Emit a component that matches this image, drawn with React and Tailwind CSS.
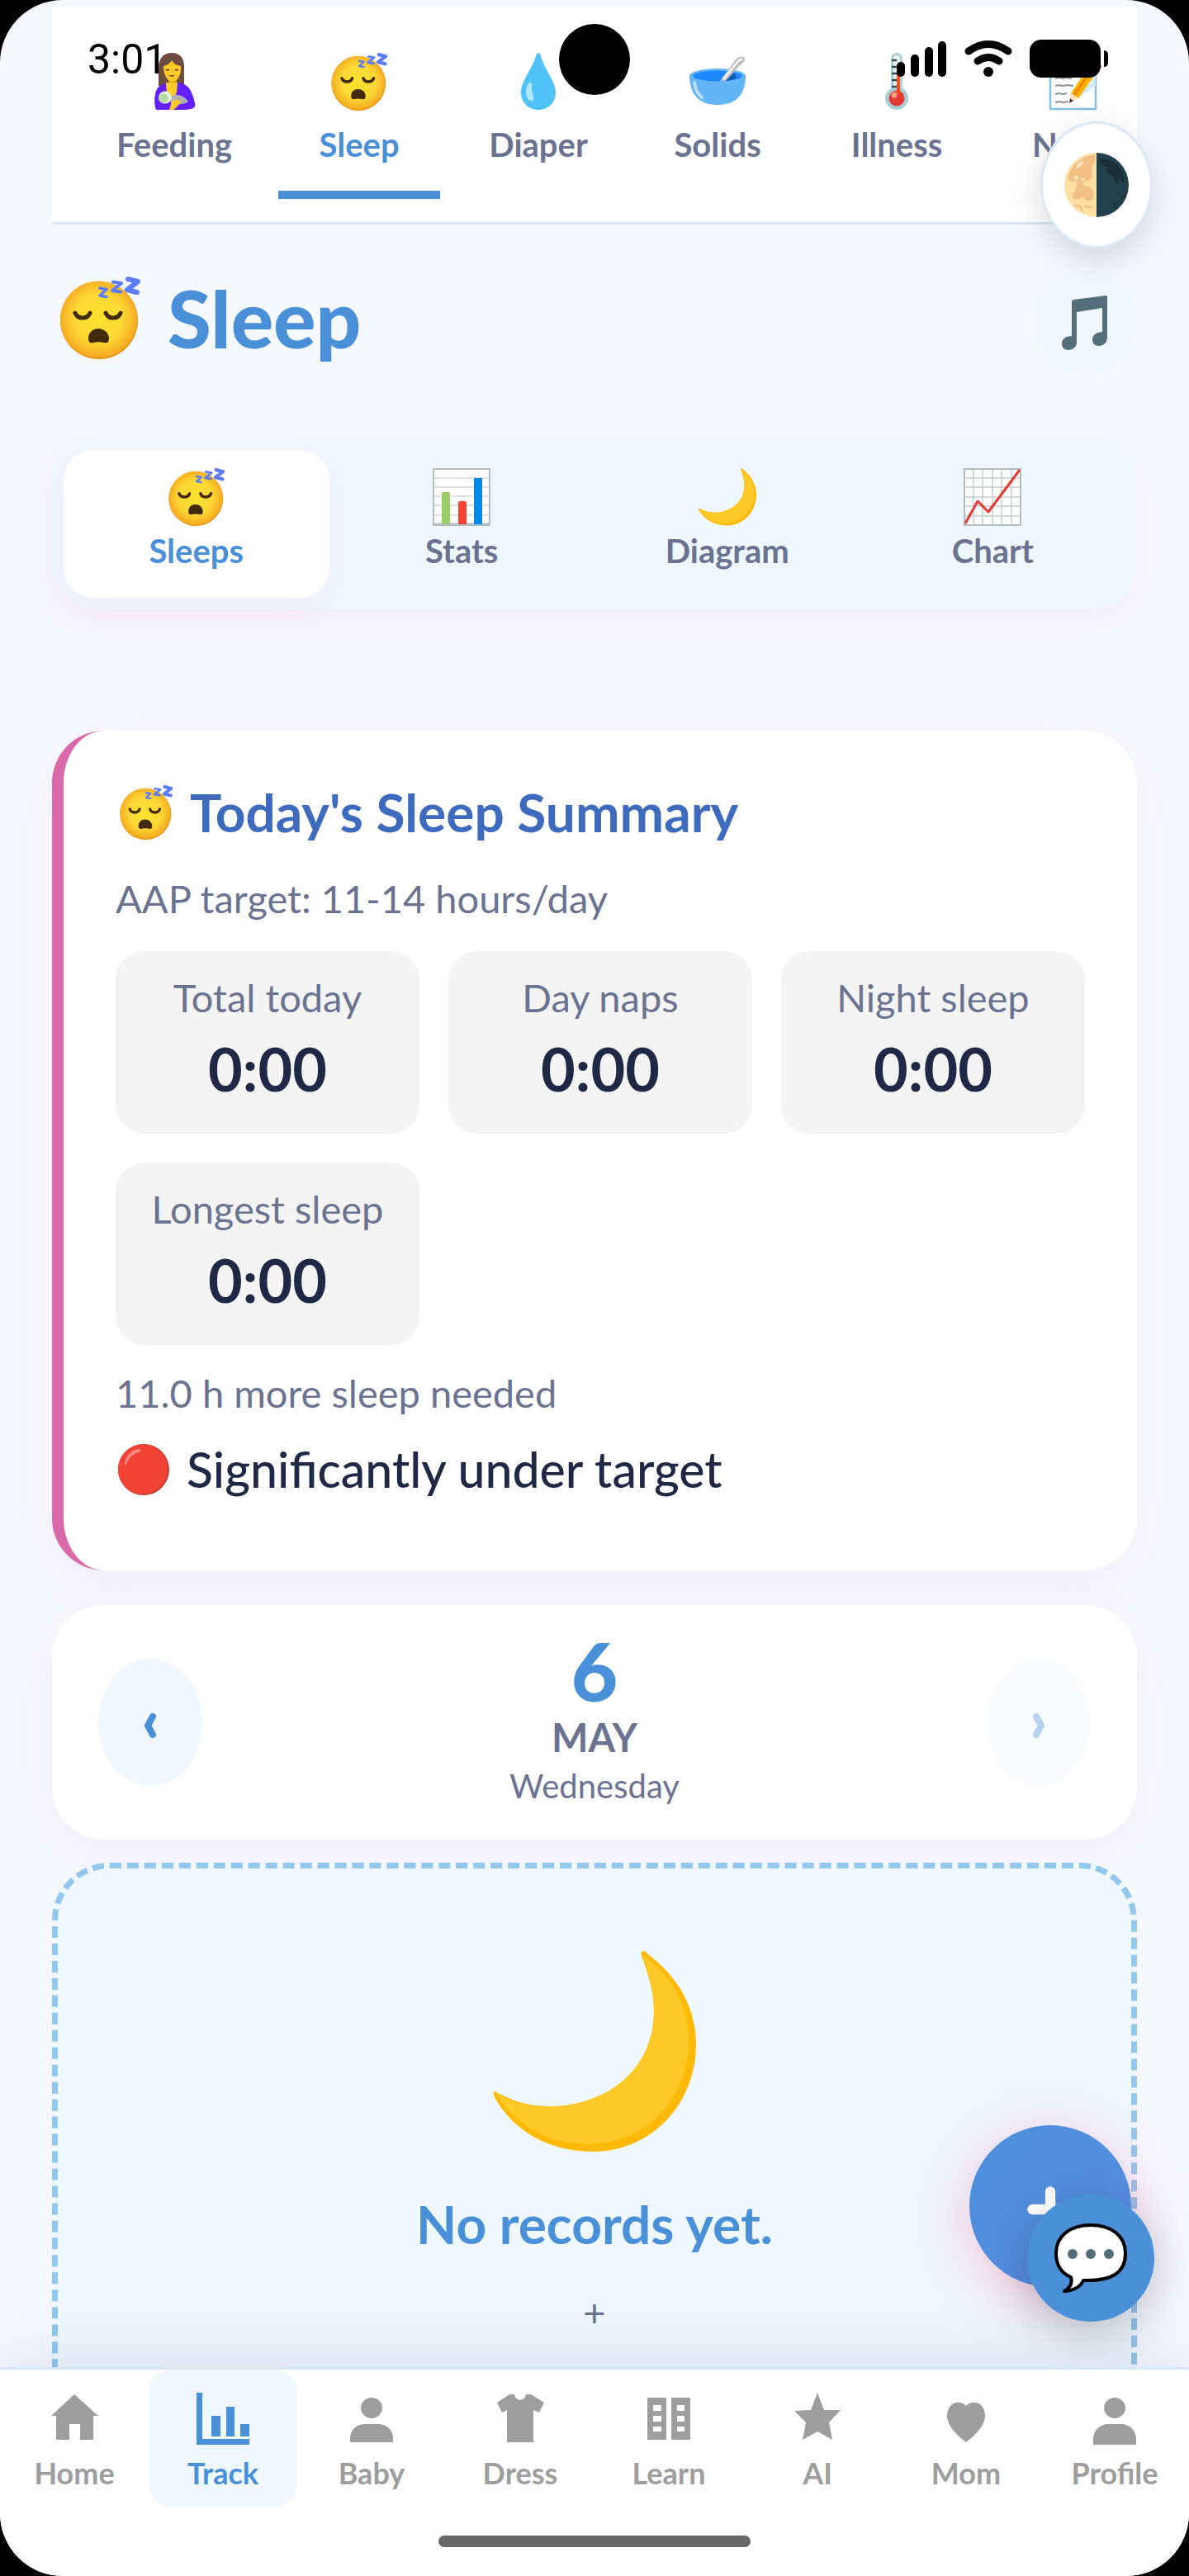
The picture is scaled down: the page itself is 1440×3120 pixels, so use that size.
import React from 'react';
import { Plus } from 'lucide-react';

/* ---------- Illustrated icons ---------- */

function SleepFace({ className }) {
  return (
    <svg viewBox="0 0 100 100" className={className} aria-hidden="true">
      <defs>
        <radialGradient id="face" cx="50%" cy="48%" r="52%">
          <stop offset="0%" stopColor="#ffe22e" />
          <stop offset="60%" stopColor="#fdd835" />
          <stop offset="100%" stopColor="#f5a820" />
        </radialGradient>
      </defs>
      <circle cx="49" cy="53" r="47" fill="#e88f0a" />
      <circle cx="48.500" cy="52" r="46.500" fill="url(#face)" />
      <g fill="none" stroke="#422b0d" strokeWidth="5" strokeLinecap="round">
        <path d="M20 44c3 8 15 8 18 0" />
        <path d="M57 44c3 8 15 8 18 0" />
      </g>
      <path d="M36 75c0-7 5-12 12-12s13 5 13 12c0 5-3 6-6 5-5-1-9-1-13 0-4 1-6-1-6-5z" fill="#422b0d" />
      <g fill="none" stroke="#5c7cfa" strokeLinejoin="round" strokeLinecap="round">
        <path strokeWidth="3.500" d="M50 14l8 1.500-8 7.500 8 1.500" />
        <path strokeWidth="4" d="M66 6.500l10 1.500-11 9 10 1.500" />
        <path strokeWidth="6" d="M84 3l12 3-13 10 12 3" />
      </g>
    </svg>
  );
}

function FeedingIcon({ className }) {
  return (
    <svg viewBox="0 0 70 70" className={className} aria-hidden="true">
      <path d="M16 37V18C16 6 23 0 32 0s15 6 15 16v24H16z" fill="#6d4c41" />
      <path d="M28 30h10v12H28z" fill="#e59600" />
      <path d="M13 69c-3-8-2-19 1-25 3-5 9-7 14-8h12c8 1 13 5 16 12 3 8 5 14 4 17-1 4-13 4-20 4z" fill="#651fff" />
      <path d="M25 36h14l-1 12c-2 6-8 7-12 2z" fill="#ffca28" />
      <path d="M22 16c4-1 8-3 10-7 2 4 6 6 11 7 1 10-4 19-10 19s-11-8-11-19z" fill="#ffca28" />
      <path d="M25 20q2 2 4 0M36 20q2 2 4 0" fill="none" stroke="#543930" strokeWidth="1.500" />
      <path d="M28 27q4 4 8 0z" fill="#795548" />
      <path d="M30 53c8-4 16-2 22 6-5 4-14 4-21 2z" fill="#b0b0b0" />
      <ellipse cx="24" cy="54" rx="8" ry="7.500" fill="#e5efdd" />
      <ellipse cx="22" cy="55" rx="6" ry="5.500" fill="#b8dba0" />
      <path d="M32 59c4-3 8-3 11 0-2 4-5 7-9 10h-5z" fill="#ffca28" />
    </svg>
  );
}

function DropIcon({ className }) {
  return (
    <svg viewBox="0 0 70 70" className={className} aria-hidden="true">
      <path d="M35 0c2 0 3 4 5 10 6 15 16 26 16 38 0 12-9 21-21 21s-21-9-21-21c0-12 9-23 16-38 2-6 3-10 5-10z" fill="#4fc3f7" />
      <path d="M25 36c3-1 2 5 2 9 1 5 4 12 1 13-4 1-8-4-8-10s2-11 5-12z" fill="#b3e5fc" />
    </svg>
  );
}

function BowlIcon({ className }) {
  return (
    <svg viewBox="0 0 70 70" className={className} aria-hidden="true">
      <path d="M1 27c0 22 10 36 34 36s34-14 34-36z" fill="#64b5f6" />
      <ellipse cx="35" cy="28" rx="34" ry="9" fill="#64b5f6" />
      <ellipse cx="35" cy="28" rx="30" ry="6.500" fill="#1e88ff" />
      <path d="M57 27c2 4-1 6-12 7l10-10z" fill="#0d5bb5" />
      <path d="M38 34l19-26c3-4 8-4 11-2 1 3-2 7-6 9L45 34z" fill="#bdbdbd" />
      <path d="M42 32l18-22 5-3" fill="none" stroke="#eeeeee" strokeWidth="3" />
      <path d="M7 36c1 8 4 14 9 18" fill="none" stroke="#bbdefb" strokeWidth="4" strokeLinecap="round" />
    </svg>
  );
}

function ThermometerIcon({ className }) {
  return (
    <svg viewBox="0 0 70 70" className={className} aria-hidden="true">
      <path d="M28 7a7 7 0 0 1 14 0v36a14 14 0 1 1-14 0z" fill="#a8d0d5" />
      <path d="M31 7a4 4 0 0 1 8 0v36h-8z" fill="#e9f6f7" />
      <circle cx="35" cy="55" r="9.500" fill="#e53935" />
      <path d="M35 22h4v28h-4z" fill="#f4511e" />
      <circle cx="32" cy="51" r="3.500" fill="#ff9e80" />
      <path d="M29 9h6M29 17h6M29 25h6M29 33h6M29 41h6" stroke="#37474f" strokeWidth="2.500" />
    </svg>
  );
}

function NotesIcon({ className }) {
  return (
    <svg viewBox="0 0 70 70" className={className} aria-hidden="true">
      <path d="M4 2h55v66H4z" fill="#ffffff" stroke="#82bfe6" strokeWidth="2.500" />
      <path d="M31 60L53 32l6-6v14z" fill="#d7ecfa" />
      <path d="M10 31l5-1 4 1 5-1 6 1M10 40l4-1 5 1 6-1 7 1M10 50l4-1 5 1 5-1M10 60l5-1 5 1 6-1" fill="none" stroke="#8a9499" strokeWidth="2" />
      <path d="M29 49L52 14l10 7-24 34z" fill="#ffb300" />
      <path d="M33 51L56 17" stroke="#f57c00" strokeWidth="2.500" />
      <path d="M29 49l9 6-11 6z" fill="#ffe0b2" />
      <path d="M28 55l4 3-5 3z" fill="#424242" />
      <path d="M52 14l5-5c4-1 8 3 9 8l-4 5z" fill="#ef5350" />
    </svg>
  );
}

function HalfMoonIcon({ className }) {
  return (
    <svg viewBox="0 0 78 78" className={className} aria-hidden="true">
      <path d="M39 0a39 39 0 0 0 0 78z" fill="#ffe0a3" />
      <path d="M39 0a39 39 0 0 1 0 78z" fill="#23404d" />
      <path d="M37 3C22 3 8 14 4 31c2 5 7 6 10 2 3 8-2 14-5 20 5 6 11 3 14 0 1 6 8 7 12 2 2-9-2-14-9-14-3 0-5-4-1-6 8-1 9-6 8-14 1-7 6-9 4-18z" fill="#f2bf86" />
      <path d="M14 19c2-6 6-9 9-9 1 4-5 6-7 9zM12 28a2.500 3 0 1 0 4 0zM20 31a2.500 3 0 1 0 5 0z" fill="#ffe9bd" />
      <path d="M13 63l6 2 3 5M24 65l9 1" fill="none" stroke="#f2bf86" strokeWidth="3" />
      <path d="M43 9c5-4 8 0 13 0 9 4 17 16 17 28l-7-6-2 9-5-12c-5-1-9-5-8-11-4 0-8-3-8-8z" fill="#1a2f38" />
      <path d="M70 53l4-5-3 9zM60 63l7-4-6 7z" fill="#1a2f38" />
    </svg>
  );
}

function MusicIcon({ className }) {
  return (
    <svg viewBox="0 0 56 66" className={className} aria-hidden="true">
      <path
        fill="#546e7a"
        d="M12 7c0-1 1-1 2-2L53 0c1 0 2 0 2 1v50c0 6-5 10-10 10s-8-3-8-8c0-5 5-9 12-9V15L18 20v37c0 5-5 9-10 9s-8-3-8-8c0-5 4-9 12-9z"
      />
    </svg>
  );
}

function BarsIcon({ className }) {
  return (
    <svg viewBox="0 0 70 70" className={className} aria-hidden="true">
      <path d="M1 1h68v68H1z" fill="#ffffff" />
      <path d="M1 12h68M1 23h68M1 34h68M1 45h68M1 57h68" stroke="#cfd8dc" strokeWidth="1.500" />
      <path d="M1 1h68v68H1z" fill="none" stroke="#b0bec5" strokeWidth="2" />
      <path d="M1 68h68" stroke="#b0bec5" strokeWidth="3" />
      <path d="M11 31q0-2 2-2h6q2 0 2 2v37H11z" fill="#9ccc65" />
      <path d="M31 42q0-2 2-2h6q2 0 2 2v26H31z" fill="#f44336" />
      <path d="M50 12h10v56H50z" fill="#0288e8" />
    </svg>
  );
}

function LineChartIcon({ className }) {
  return (
    <svg viewBox="0 0 70 70" className={className} aria-hidden="true">
      <path d="M1 1h68v68H1z" fill="#ffffff" />
      <path
        d="M1 12h68M1 23h68M1 35h68M1 46h68M1 58h68M12 1v68M23 1v68M35 1v68M46 1v68M58 1v68"
        stroke="#c3ced3"
        strokeWidth="1.500"
      />
      <path d="M1 1h68v68H1z" fill="none" stroke="#b0bec5" strokeWidth="2" />
      <path d="M2 67L17 40l13 13L68 2" fill="none" stroke="#e53935" strokeWidth="3" strokeLinejoin="round" />
    </svg>
  );
}

function CrescentIcon({ className }) {
  return (
    <svg viewBox="0 0 245 245" className={className} aria-hidden="true">
      <path
        fill="#ffb906"
        d="M179 1c2-2 5 0 9 4 37 28 57 66 57 108 0 72-54 130-125 130C65 243 22 216 1 177c-2-6-1-8 2-6 36 20 72 21 104 12 56-16 87-58 87-110 0-24-8-48-14-65-1-3-2-5-1-7z"
      />
      <path
        fill="#ffca28"
        d="M181 5c36 27 55 62 55 103 0 70-52 126-121 126-50 0-89-24-113-62 38 21 74 20 105 11 56-16 87-58 87-110 0-24-7-47-13-68z"
      />
    </svg>
  );
}

function SpeechIcon({ className }) {
  return (
    <svg viewBox="0 0 90 84" className={className} aria-hidden="true">
      <path
        d="M45 2c25 0 42 13 42 34 0 23-15 34-51 33-3 7-11 12-23 13 7-4 10-10 8-17C9 60 3 50 3 36 3 15 20 2 45 2z"
        fill="#ffffff"
        stroke="#000000"
        strokeWidth="4"
        strokeLinejoin="round"
      />
      <g fill="#546e7a">
        <circle cx="23" cy="37" r="6" />
        <circle cx="45" cy="37" r="6" />
        <circle cx="67" cy="37" r="6" />
      </g>
    </svg>
  );
}

function RedDot({ className }) {
  return (
    <svg viewBox="0 0 64 64" className={className} aria-hidden="true">
      <circle cx="32" cy="32" r="31" fill="#c33c33" />
      <circle cx="31" cy="31.500" r="30" fill="#f44336" />
      <path d="M9 24C11 14 18 7 27 7c3 1 2 3-1 4-7 2-12 7-15 14-1 2-3 2-2-1z" fill="#ff8a80" />
    </svg>
  );
}

function Chevron({ className }) {
  return (
    <svg viewBox="0 0 16 30" className={className} aria-hidden="true">
      <path d="M11 4L5 15l6 11" fill="none" stroke="currentColor" strokeWidth="8" strokeLinecap="round" strokeLinejoin="round" />
    </svg>
  );
}

/* ---------- Data ---------- */

const categories = [
  { label: 'Feeding', Icon: FeedingIcon },
  { label: 'Sleep', Icon: SleepFace, active: true },
  { label: 'Diaper', Icon: DropIcon },
  { label: 'Solids', Icon: BowlIcon },
  { label: 'Illness', Icon: ThermometerIcon },
  { label: 'Notes', Icon: NotesIcon },
];

const views = [
  { label: 'Sleeps', Icon: SleepFace, active: true },
  { label: 'Stats', Icon: BarsIcon },
  { label: 'Diagram', Icon: CrescentIcon },
  { label: 'Chart', Icon: LineChartIcon },
];

const stats = [
  { label: 'Total today', value: '0:00' },
  { label: 'Day naps', value: '0:00' },
  { label: 'Night sleep', value: '0:00' },
  { label: 'Longest sleep', value: '0:00' },
];

// Solid glyphs on a 70 unit grid
const navItems = [
  { label: 'Home', d: 'M35 6L7 32h6v29h16V42h13v19h16V32h6z' },
  { label: 'Track', d: 'M3 4h7v56h57v7H3zM21 32h11v25H21zM39 21h10v36H39zM56 42h11v15H56z', active: true },
  { label: 'Baby', d: 'M35 10a13 12.500 0 1 1 0 25a13 12.500 0 1 1 0-25zM9 64v-5c0-10 8-17 18-17h16c10 0 18 7 18 17v5z' },
  { label: 'Dress', d: 'M22 6h6c1 9 13 9 14 0h6l16 10-6 12-7-3v39H19V25l-6 3L7 16z' },
  {
    label: 'Learn',
    d: 'M9 10h23v51H9zM38 10h23v51H38zM16 19v7h10v-7zM16 32v7h10v-7zM16 45v6h10v-6zM45 19v7h9v-7zM45 32v7h9v-7zM45 45v6h9v-6z',
  },
  { label: 'AI', d: 'M35 4l8 21h20L49 40l4 21-18-10-18 10 4-21L7 26l20-1z' },
  { label: 'Mom', d: 'M35 20c4-5 13-6 18-1 4 4 5 9 5 14-1 13-15 25-23 31-8-6-22-18-23-31 0-5 1-10 5-14 5-5 14-4 18 1z' },
  { label: 'Profile', d: 'M35 10a13 12.500 0 1 1 0 25a13 12.500 0 1 1 0-25zM9 67v-7c0-10 8-18 18-18h16c10 0 18 8 18 18v7z' },
];

/* ---------- Sections ---------- */

function StatusBar() {
  return (
    <div className="pointer-events-none absolute inset-x-0 top-0 z-20 flex h-36 items-center justify-between pl-[106px] pr-24">
      <span className="font-[Roboto] text-[50px] leading-none text-black">3:01</span>
      <div className="absolute left-1/2 size-[86px] -translate-x-1/2 rounded-full bg-black" />
      <svg viewBox="0 0 258 48" className="h-12 w-[258px]" aria-hidden="true">
        <g fill="#000">
          <rect x="0" y="27" width="10" height="18" rx="5" />
          <rect x="17" y="18" width="10" height="27" rx="5" />
          <rect x="34" y="9" width="10" height="36" rx="5" />
          <rect x="50" y="2" width="10" height="43" rx="5" />
          <circle cx="111" cy="39" r="6" />
          <rect x="161" y="0" width="86" height="46" rx="14" />
          <path d="M251 13q5 0 5 6v8q0 6-5 6z" />
        </g>
        <g fill="none" stroke="#000" strokeWidth="9" strokeLinecap="round">
          <path d="M87 14q24-17 48 0" />
          <path d="M98 26q13-9 26 0" />
        </g>
      </svg>
    </div>
  );
}

function CategoryTabs() {
  return (
    <div className="flex gap-[21px] overflow-hidden border-b-[3px] border-[#d9e6f3] bg-white pt-14 pb-7 pl-[43px]">
      {categories.map(({ label, Icon, active }) => (
        <button
          key={label}
          type="button"
          className={`flex min-w-[196px] shrink-0 flex-col items-center border-b-[10px] px-[35px] pb-8 ${
            active ? 'border-[#4a90d9] text-[#4a90d9]' : 'border-transparent text-[#6b7390]'
          }`}
        >
          <Icon className="size-[70px]" />
          <span className="mt-[17px] text-[40px] leading-[48px] font-bold">{label}</span>
        </button>
      ))}
    </div>
  );
}

function ViewTabs() {
  return (
    <div className="mt-[77px] grid grid-cols-4 rounded-[56px] bg-[#eff7ff] p-[14px] shadow-[0_14px_42px_rgba(230,110,170,0.07)]">
      {views.map(({ label, Icon, active }) => (
        <button
          key={label}
          type="button"
          className={`flex flex-col items-center rounded-[35px] pt-[22px] pb-[33px] text-[40px] leading-[48px] font-bold ${
            active
              ? 'bg-white text-[#4a90d9] shadow-[0_14px_42px_rgba(230,110,170,0.08)]'
              : 'text-[#6b7390]'
          }`}
        >
          <Icon className="size-[70px]" />
          <span className="mt-1.5">{label}</span>
        </button>
      ))}
    </div>
  );
}

function Summary() {
  return (
    <section className="mt-[147px] rounded-[63px] border-l-[14px] border-[#d96aa9] bg-white px-[63px] pt-[63px] pb-[87px] shadow-[0_14px_56px_rgba(220,110,170,0.07)]">
      <h2 className="flex items-center gap-5 text-[64px] leading-[72px] font-bold text-[#3f6bbf]">
        <SleepFace className="ml-1 size-[66px]" />
        Today's Sleep Summary
      </h2>
      <p className="mt-10 text-[47px] leading-[56px] text-[#6b7390]">AAP target: 11-14 hours/day</p>
      <dl className="mt-9 grid grid-cols-3 gap-[35px]">
        {stats.map(({ label, value }) => (
          <div key={label} className="rounded-[35px] bg-[#f4f4f4] pt-7 pb-[37px] text-center">
            <dt className="text-[47px] leading-[56px] whitespace-nowrap text-[#6b7390]">{label}</dt>
            <dd className="mt-4 text-[72px] leading-[84px] font-bold text-[#1f2945]">{value}</dd>
          </div>
        ))}
      </dl>
      <p className="mt-[30px] text-[47px] leading-[56px] text-[#6b7390]">11.0 h more sleep needed</p>
      <p className="mt-[30px] flex items-center gap-5 text-[59px] leading-[70px] font-medium text-[#1f2945]">
        <RedDot className="ml-0.5 size-[64px]" />
        Significantly under target
      </p>
    </section>
  );
}

function DatePicker() {
  return (
    <section className="mt-[42px] flex items-center justify-between rounded-[63px] bg-white px-14 pt-[30px] pb-[42px] shadow-[0_14px_56px_rgba(220,110,170,0.07)]">
      <button
        type="button"
        aria-label="Previous day"
        className="mt-3 flex h-[154px] w-[126px] items-center justify-center rounded-[50%] bg-[#eff7ff] pt-2 text-[#4a90d9]"
      >
        <Chevron className="h-[30px] w-4" />
      </button>
      <div className="text-center text-[#6b7390]">
        <div className="text-[98px] leading-[98px] font-black text-[#4a90d9]">6</div>
        <div className="mt-1 text-[47px] leading-[56px] font-bold">MAY</div>
        <div className="mt-2 text-[40px] leading-[46px]">Wednesday</div>
      </div>
      <button
        type="button"
        aria-label="Next day"
        disabled
        className="mt-3 flex h-[154px] w-[126px] items-center justify-center rounded-[50%] bg-[#eff7ff] pt-2 text-[#4a90d9] opacity-40"
      >
        <Chevron className="h-[30px] w-4 rotate-180" />
      </button>
    </section>
  );
}

function EmptyState() {
  return (
    <section className="mt-7 flex flex-col items-center rounded-[70px] border-[7px] border-dashed border-[#93c7ee] bg-[#eff7ff] px-14 pt-[100px] pb-[200px]">
      <CrescentIcon className="size-[245px]" />
      <p className="mt-[50px] text-[64px] leading-[72px] font-bold text-[#4a90d9]">No records yet.</p>
      <p className="mt-[42px] text-[47px] leading-[56px] text-[#6b7390]">+</p>
    </section>
  );
}

function BottomNav() {
  return (
    <nav className="relative shrink-0 border-t-[3px] border-[#d9e6f3] bg-white shadow-[0_-14px_70px_rgba(40,60,90,0.1)]">
      <div className="grid grid-cols-8">
        {navItems.map(({ label, d, active }) => (
          <a
            key={label}
            href={`#${label.toLowerCase()}`}
            className={`flex flex-col items-center rounded-[28px] pt-6 pb-5 text-[36px] leading-[42px] font-bold ${
              active ? 'bg-[#eff7ff] text-[#4a90d9]' : 'text-[#9e9e9e]'
            }`}
          >
            <svg viewBox="0 0 70 70" className="size-[70px]" aria-hidden="true">
              <path d={d} fill="currentColor" fillRule="evenodd" />
            </svg>
            <span className="mt-[10px]">{label}</span>
          </a>
        ))}
      </div>
      <div className="mx-auto mt-[35px] mb-[35px] h-[14px] w-[378px] rounded-full bg-[#666666]" />
    </nav>
  );
}

export default function App() {
  return (
    <div className="bg-black font-[Lato,sans-serif]">
      <div className="relative flex h-screen flex-col overflow-hidden rounded-[76px] bg-[#f5f8ff]">
        <StatusBar />

        <main className="min-h-0 flex-1 overflow-hidden px-[63px] pt-2">
          <CategoryTabs />

          <header className="mt-14 flex items-center justify-between">
            <h1 className="flex items-center gap-8 pb-3 pl-2 text-[96px] leading-[110px] font-black text-[#4a90d9]">
              <SleepFace className="size-[100px]" />
              Sleep
            </h1>
            <button
              type="button"
              aria-label="Lullabies"
              className="flex size-[126px] items-center justify-center rounded-full bg-[#eff7ff]"
            >
              <MusicIcon className="h-[66px] w-14" />
            </button>
          </header>

          <ViewTabs />
          <Summary />
          <DatePicker />
          <EmptyState />
        </main>

        <BottomNav />

        {/* Theme switch */}
        <button
          type="button"
          aria-label="Toggle theme"
          className="absolute top-[147px] right-11 z-10 flex h-[154px] w-[136px] items-center justify-center rounded-[50%] border-[3px] border-[#dbe8f5] bg-white shadow-[0_14px_42px_rgba(0,0,0,0.14)]"
        >
          <HalfMoonIcon className="size-[78px]" />
        </button>

        {/* Floating actions */}
        <button
          type="button"
          aria-label="Add record"
          className="absolute right-[70px] bottom-[350px] flex size-[196px] items-center justify-center rounded-full bg-linear-to-br from-[#4a90d9] to-[#5b8be5] pt-2 text-white shadow-[0_14px_70px_rgba(255,90,140,0.35)]"
        >
          <Plus className="size-[74px]" strokeWidth={4} />
        </button>
        <button
          type="button"
          aria-label="Open chat"
          className="absolute right-[42px] bottom-[308px] flex size-[154px] items-center justify-center rounded-full bg-[#4a90d9] shadow-[0_14px_56px_rgba(0,0,0,0.22)]"
        >
          <SpeechIcon className="h-[84px] w-[90px]" />
        </button>
      </div>
    </div>
  );
}
